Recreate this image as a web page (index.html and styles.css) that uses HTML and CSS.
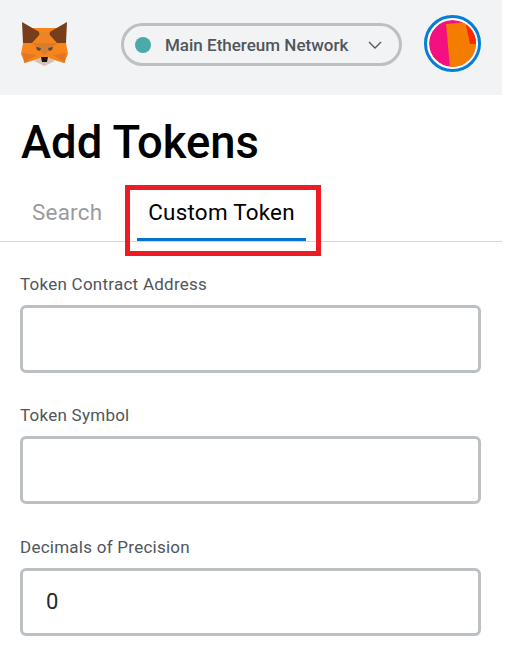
FILE: index.html
```html
<!DOCTYPE html>
<html lang="en">
<head>
    <meta charset="UTF-8">
    <meta name="viewport" content="width=device-width, initial-scale=1.0">
    <title>Add Tokens</title>
    <link rel="stylesheet" href="styles.css">
</head>
<body>
    <div class="page">
        <header class="app-header">
            <svg class="fox" viewBox="0 0 47 45" width="47" height="45">
                <polygon points="6,7 41,7 45,22 47,33 43,42 30,38 23.5,45 17,38 4,42 0,33 2,22" fill="#f6851b"/>
                <polygon points="1,1 20,12 11,22 2,22" fill="#763e1a"/>
                <polygon points="46,1 27,12 36,22 45,22" fill="#763e1a"/>
                <polygon points="18,11 29,11 27,22 20,22" fill="#ee8423"/>
                <polygon points="11,22 36,22 23.5,34" fill="#d87c30"/>
                <polygon points="15,26 20,27 19,30 16,29" fill="#5a4a3a"/>
                <polygon points="32,26 27,27 28,30 31,29" fill="#5a4a3a"/>
                <polygon points="3,42 15,34 2,32" fill="#e27625"/>
                <polygon points="44,42 32,34 45,32" fill="#e27625"/>
                <polygon points="13,40 20,36 27,36 34,40 23.5,45" fill="#d7c1b3"/>
                <polygon points="20,36 27,36 26,41 21,41" fill="#161616"/>
            </svg>
            <button class="network-pill" type="button">
                <span class="network-dot"></span>
                <span class="network-name">Main Ethereum Network</span>
                <svg class="caret" viewBox="0 0 14 8" width="14" height="8">
                    <polyline points="1,1 7,7 13,1" fill="none" stroke="#50565c" stroke-width="1.3"/>
                </svg>
            </button>
            <div class="account-ring">
                <svg class="identicon" viewBox="0 0 47 47" width="47" height="47">
                    <circle cx="23.5" cy="23.5" r="23.5" fill="#f5107f"/>
                    <polygon points="17,4 38,2 50,0 50,50 21,48" fill="#f47d00"/>
                    <polygon points="37,5 50,0 50,24 41,24" fill="#f92a00"/>
                </svg>
            </div>
        </header>

        <h1 class="page-title">Add Tokens</h1>

        <nav class="tabs">
            <span class="tab">Search</span>
            <span class="tab tab-active">Custom Token</span>
            <span class="tab-highlight"></span>
        </nav>

        <form class="token-form">
            <label class="field">
                <span class="field-label">Token Contract Address</span>
                <input class="field-input" type="text">
            </label>
            <label class="field">
                <span class="field-label">Token Symbol</span>
                <input class="field-input" type="text">
            </label>
            <label class="field">
                <span class="field-label">Decimals of Precision</span>
                <input class="field-input" type="text" value="0">
            </label>
        </form>
    </div>
</body>
</html>
```

FILE: styles.css
```css
html, body {
    margin: 0;
    padding: 0;
    background: white;
    overflow: hidden;
}
body {
    font-family: Roboto, sans-serif;
    color: #000;
}
.page {
    width: 502px;
}
.app-header {
    height: 95px;
    background-color: #f2f3f4;
    display: flex;
    align-items: flex-start;
    padding-left: 21px;
    box-sizing: border-box;
}
.fox {
    margin-top: 21px;
    flex: none;
}
.network-pill {
    margin: 23px 0 0 53px;
    width: 281px;
    height: 43px;
    box-sizing: border-box;
    border: 3px solid #bbc0c5;
    border-radius: 22px;
    background: transparent;
    display: flex;
    align-items: center;
    padding: 0 17px 0 11px;
    font-family: inherit;
}
.network-dot {
    width: 16px;
    height: 16px;
    border-radius: 50%;
    background-color: #4aa9a9;
    flex: none;
}
.network-name {
    margin-left: 14px;
    font-size: 17px;
    font-weight: 500;
    color: #50565c;
    white-space: nowrap;
    flex: 1;
    text-align: left;
}
.caret {
    flex: none;
}
.account-ring {
    margin: 15px 0 0 22px;
    width: 57px;
    height: 57px;
    box-sizing: border-box;
    border: 3px solid #037dd6;
    border-radius: 50%;
    background: white;
    display: flex;
    align-items: center;
    justify-content: center;
    flex: none;
}
.identicon {
    border-radius: 50%;
    flex: none;
}
.page-title {
    margin: 0;
    padding: 0 0 0 21px;
    height: 60px;
    line-height: 96px;
    font-size: 45.4px;
    font-weight: 500;
    color: #000;
}
.tabs {
    position: relative;
    display: flex;
    height: 87px;
    box-sizing: border-box;
    align-items: flex-end;
    padding-left: 20px;
    border-bottom: 1px solid #d6d9dc;
}
.tab {
    font-size: 22.4px;
    color: #9b9b9b;
    padding: 0 11px 13px 12px;
    line-height: 26px;
    letter-spacing: 0.25px;
    border-bottom: 3px solid transparent;
}
.tab-active {
    color: #000;
    margin-left: 24px;
    padding-left: 11px;
    border-bottom-color: #0372d2;
}
.tab-highlight {
    position: absolute;
    left: 125px;
    top: 30px;
    width: 196px;
    height: 71px;
    box-sizing: border-box;
    border: 5px solid #ed1c24;
}
.token-form {
    padding: 30.9px 21px 0 20px;
}
.field {
    display: block;
    margin-bottom: 31.5px;
}
.field-label {
    display: block;
    font-size: 17px;
    line-height: 22px;
    color: #50565c;
    letter-spacing: 0.25px;
    margin-bottom: 10px;
}
.field-input {
    display: block;
    width: 100%;
    height: 68px;
    box-sizing: border-box;
    border: 3px solid #bbc0c5;
    border-radius: 6px;
    padding: 0 23px;
    font-family: inherit;
    font-size: 22px;
    color: #24292e;
    outline: none;
}
```
